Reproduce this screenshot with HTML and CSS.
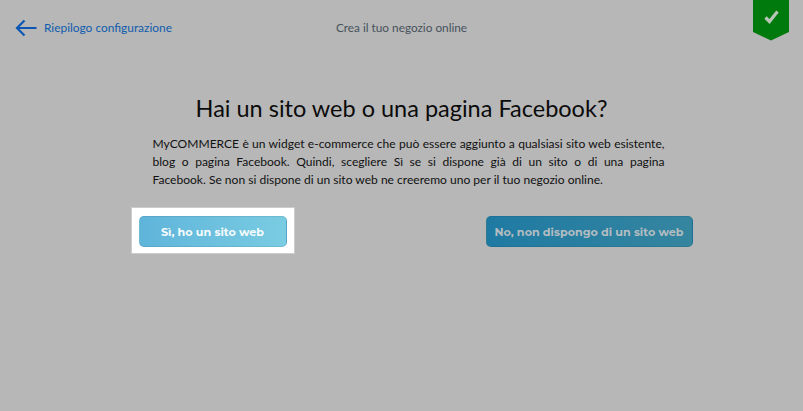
FILE: index.html
```html
<!DOCTYPE html>
<html lang="it">
<head>
<meta charset="utf-8">
<title>Crea il tuo negozio online</title>
<link rel="stylesheet" href="styles.css">
</head>
<body>
<div class="page">
  <header class="topbar">
    <a class="back" href="#">
      <svg class="back-icon" width="22" height="18" viewBox="0 0 22 18" aria-hidden="true"><path d="M21.5 9H2M9.5 1.5 2 9l7.5 7.5" fill="none" stroke="#0c57b4" stroke-width="2.2"/></svg>
      <span>Riepilogo configurazione</span>
    </a>
    <div class="step">Crea il tuo negozio online</div>
    <div class="badge">
      <svg width="36" height="41" viewBox="0 0 36 41" aria-hidden="true"><path d="M0 0H36V32L18 40.5 0 32Z" fill="#007a0c"/><path d="M12.5 17.5l4 4 8-10" fill="none" stroke="#b9c4b9" stroke-width="3.2"/></svg>
    </div>
  </header>
  <main class="content">
    <h1 class="title">Hai un sito web o una pagina Facebook?</h1>
    <p class="intro">MyCOMMERCE è un widget e-commerce che può essere aggiunto a qualsiasi sito web esistente, blog o pagina Facebook. Quindi, scegliere Sì se si dispone già di un sito o di una pagina Facebook.&nbsp;Se non si dispone di un sito web ne creeremo uno per il tuo negozio online.</p>
    <div class="choices">
      <div class="spotlight"><button class="btn btn-yes">Sì, ho un sito web</button></div>
      <button class="btn btn-no">No, non dispongo di un sito web</button>
    </div>
  </main>
</div>
</body>
</html>
```
FILE: styles.css
```css
* { box-sizing: border-box; }
html, body { margin: 0; height: 100%; }
body { background: #b7b7b7; font-family: "Lato", "Open Sans", sans-serif; overflow: hidden; }
.page { height: 411px; display: flex; flex-direction: column; }
.topbar { position: relative; height: 56px; flex: none; display: grid; grid-template-columns: 1fr; align-items: center; }
.back { position: absolute; left: 15px; top: 19px; display: flex; align-items: center; gap: 7px; color: #0f5cae; text-decoration: none; font-size: 11.9px; line-height: 18px; }
.back-icon { flex: none; }
.step { text-align: center; color: #46525c; font-size: 11.8px; line-height: 18px; margin-top: -1px; }
.badge { position: absolute; right: 14px; top: 0; height: 41px; line-height: 0; }
.content { display: flex; flex-direction: column; align-items: center; }
.title { margin: 36px 0 0; font-weight: 400; font-size: 23.5px; line-height: 32px; color: #0b0b0b; text-align: center; }
.intro { width: 512px; margin: 11px 0 0 14px; font-size: 12.06px; line-height: 18px; color: #111; text-align: justify; }
.choices { width: 562px; margin: 18px 0 0 20px; display: flex; justify-content: space-between; align-items: center; }
.spotlight { background: #fff; padding: 8px 6px 8px 7px; border: 1px solid #ccc; width: 164px; height: 47px; display: flex; flex: none; }
.btn { border: 1px solid rgba(0,0,0,.08); border-radius: 5px; font-family: "Montserrat", "Lato", sans-serif; font-weight: 700; font-size: 11.2px; height: 31px; padding: 0; }
.btn-yes { width: 148px; background: linear-gradient(90deg, #5fb4da, #7accE2); color: #f5fbfd; }
.btn-no { width: 207px; margin-top: 2px; background: linear-gradient(90deg, #1f7aa3, #35859f); color: #b3bdc1; }
```
